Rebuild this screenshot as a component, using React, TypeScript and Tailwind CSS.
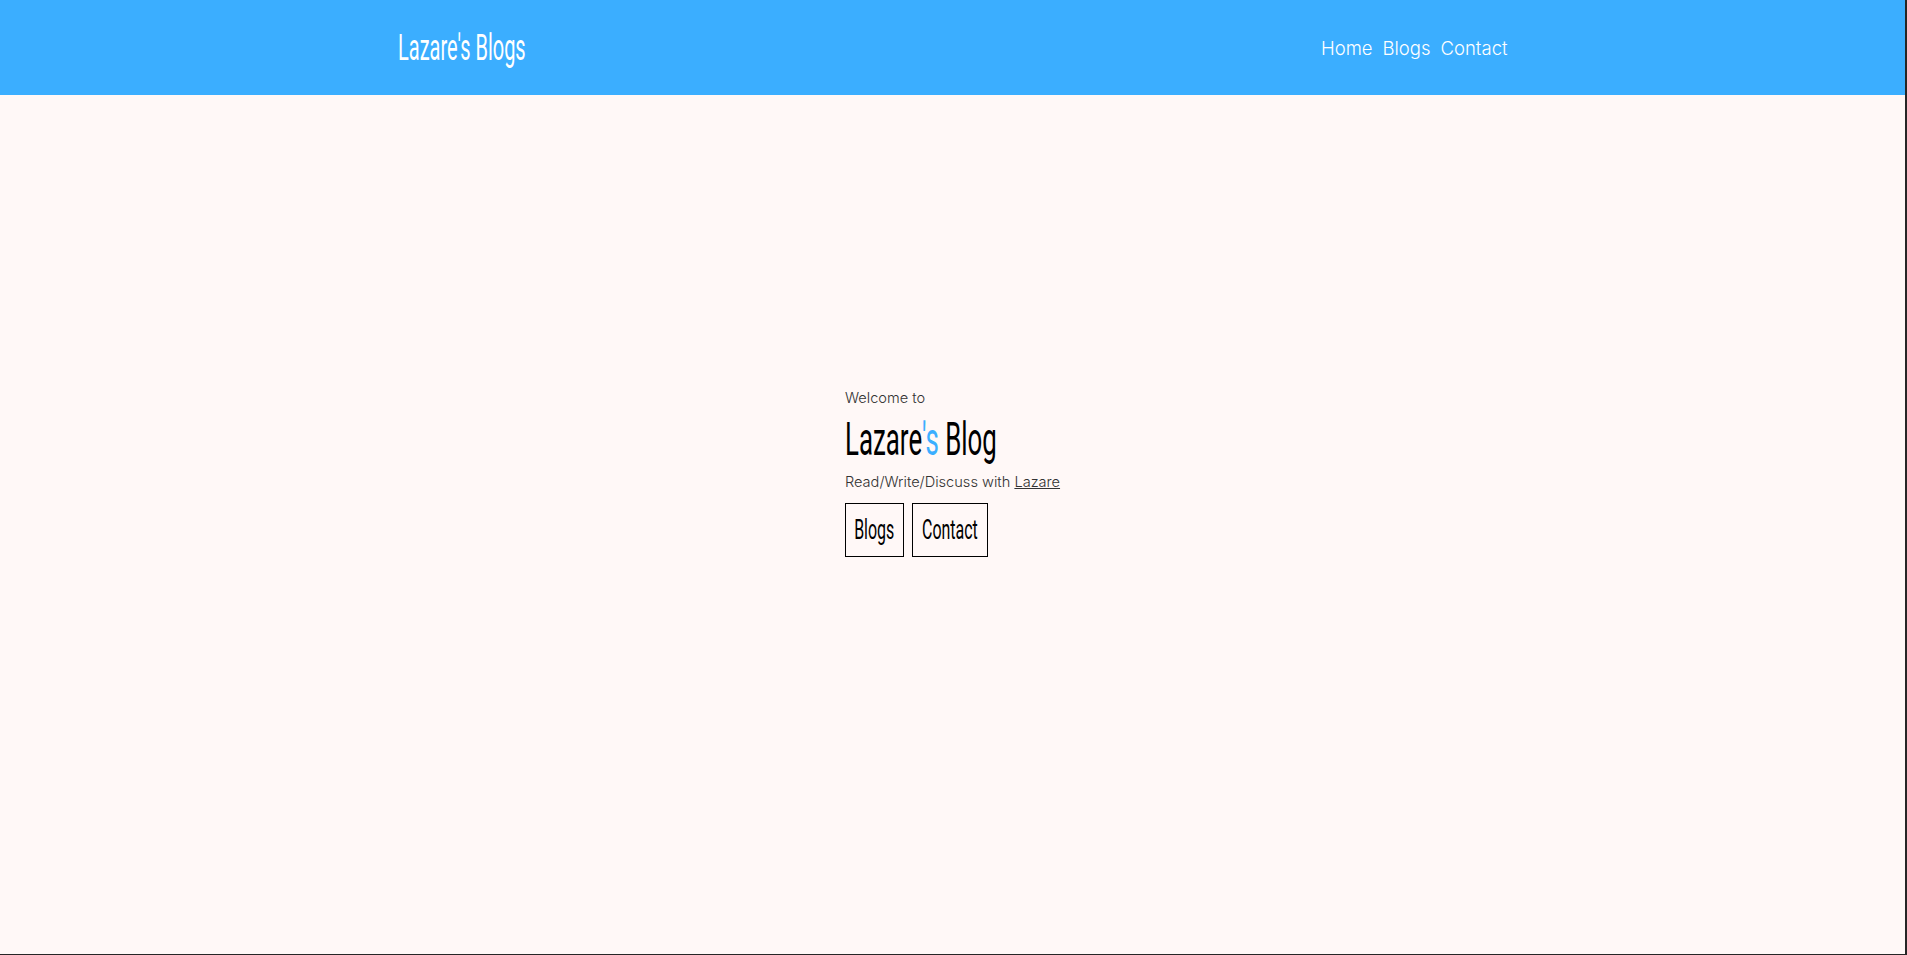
const condensed = { fontFamily: 'Roboto, "Liberation Sans", sans-serif' };

const App = () => {
  return (
    <div
      className="flex h-screen w-full flex-col border-r-2 border-b border-[#262626] bg-[#fff8f7]"
      style={{ fontFamily: 'Inter, "Liberation Sans", sans-serif' }}>
      <header className="h-[95px] shrink-0 bg-[#3baeff]">
        <nav className="mx-auto flex h-full max-w-[1140px] items-center justify-between px-[15px]">
          <a href="#" className="block w-[130px] whitespace-nowrap text-white">
            <span
              className="inline-block origin-left scale-x-[0.54] text-[37px] leading-none font-normal"
              style={condensed}>
              Lazare's Blogs
            </span>
          </a>
          <div className="flex gap-[10px] pt-[3px] text-[18.5px] font-light text-white">
            <a href="#">Home</a>
            <a href="#">Blogs</a>
            <a href="#">Contact</a>
          </div>
        </nav>
      </header>
      <main className="flex flex-1 items-center justify-center pb-[104px]">
        <div className="text-[#333]">
          <p className="text-[14.6px] font-light">Welcome to</p>
          <h1 className="mt-[3px] w-[150px] whitespace-nowrap text-black">
            <span
              className="inline-block origin-left scale-x-[0.55] text-[47px] leading-[52px] font-normal"
              style={condensed}>
              Lazare<span className="text-[#3baeff]">'s</span> Blog
            </span>
          </h1>
          <p className="mt-[7px] text-[14.6px] font-light">
            Read/Write/Discuss with{' '}
            <a href="#" className="underline">
              Lazare
            </a>
          </p>
          <div className="mt-[10px] flex gap-[8px]">
            <button className="flex h-[54px] w-[59px] items-center justify-center border border-black">
              <span
                className="inline-block scale-x-[0.57] text-[28px] font-normal text-black"
                style={condensed}>
                Blogs
              </span>
            </button>
            <button className="flex h-[54px] w-[76px] items-center justify-center border border-black">
              <span
                className="inline-block scale-x-[0.57] text-[28px] font-normal text-black"
                style={condensed}>
                Contact
              </span>
            </button>
          </div>
        </div>
      </main>
    </div>
  );
};

export default App;
